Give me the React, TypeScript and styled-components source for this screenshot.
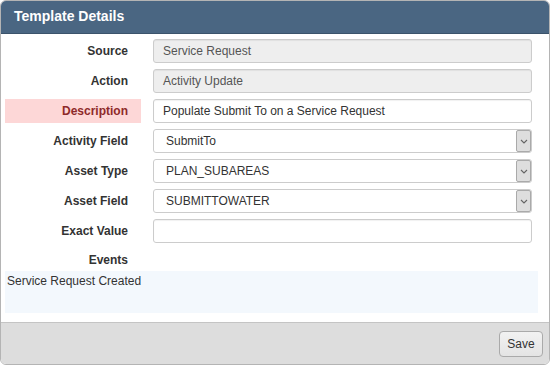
import React from "react";
import styled, { createGlobalStyle } from "styled-components";

const GlobalStyle = createGlobalStyle`
  html, body { margin: 0; padding: 0; background: #ffffff; overflow: hidden; }
  body { font-family: "Liberation Sans", Arial, sans-serif; font-size: 12px; color: #333; }
  * { box-sizing: border-box; }
`;

const Panel = styled.div`
  width: 550px;
  height: 365px;
  border: 1px solid #b4b4b4;
  border-radius: 6px;
  overflow: hidden;
  display: flex;
  flex-direction: column;
  background: #ffffff;
`;

const Header = styled.div`
  height: 33px;
  flex: none;
  background: #4a6682;
  border-bottom: 1px solid #3b536b;
  display: flex;
  align-items: center;
  padding: 0 0 2px 13px;
  color: #ffffff;
  font-weight: bold;
  font-size: 14px;
`;

const Body = styled.div`
  flex: 1;
  padding: 5px 11px 0 4px;
  display: flex;
  flex-direction: column;
`;

const FormGrid = styled.div`
  display: grid;
  grid-template-columns: 136px 1fr;
  column-gap: 12px;
  row-gap: 6px;
  margin-right: 6px;
`;

const Label = styled.div<{ $error?: boolean; $short?: boolean }>`
  height: ${(p) => (p.$short ? "22px" : "24px")};
  display: flex;
  align-items: center;
  justify-content: flex-end;
  padding-right: 13px;
  font-weight: bold;
  font-size: 12px;
  color: ${(p) => (p.$error ? "#8e2a2a" : "#333333")};
  background: ${(p) => (p.$error ? "#fdd7d7" : "transparent")};
`;

const TextField = styled.div<{ $disabled?: boolean }>`
  height: 24px;
  border: 1px solid #cccccc;
  border-radius: 3px;
  background: ${(p) => (p.$disabled ? "#eeeeee" : "#ffffff")};
  box-shadow: inset 0 1px 1px rgba(0, 0, 0, 0.06);
  display: flex;
  align-items: center;
  padding-left: 9px;
  font-size: 12px;
  color: ${(p) => (p.$disabled ? "#555555" : "#333333")};
  white-space: nowrap;
  overflow: hidden;
`;

const SelectField = styled.div`
  height: 24px;
  border: 1px solid #cccccc;
  border-radius: 3px;
  background: #ffffff;
  display: flex;
  align-items: center;
  justify-content: space-between;
  padding: 0 0 0 12px;
  font-size: 12px;
  color: #333333;
`;

const ArrowButton = styled.span`
  width: 15px;
  height: 22px;
  background: #dedede;
  border: 1px solid #aaaaaa;
  border-radius: 2px;
  display: flex;
  align-items: center;
  justify-content: center;
`;

const Empty = styled.div``;

const EventsBox = styled.div`
  height: 42px;
  background: #f3f8fd;
  padding: 3px 2px;
  font-size: 12px;
  color: #333333;
`;

const Footer = styled.div`
  height: 42px;
  flex: none;
  background: #dddddd;
  border-top: 1px solid #c4c4c4;
  display: flex;
  align-items: center;
  justify-content: flex-end;
  padding-right: 6px;
`;

const SaveButton = styled.button`
  width: 44px;
  height: 26px;
  border: 1px solid #aaaaaa;
  border-radius: 4px;
  background: linear-gradient(#f2f2f2, #e4e4e4);
  font-family: "Liberation Sans", Arial, sans-serif;
  font-size: 12px;
  color: #333333;
  padding: 0;
`;

const Chevron = () => (
  <svg width="8" height="5" viewBox="0 0 8 5">
    <path d="M1 1 L4 4 L7 1" fill="none" stroke="#666" strokeWidth="1.1" />
  </svg>
);

const Select = ({ value }: { value: string }) => (
  <SelectField>
    <span>{value}</span>
    <ArrowButton>
      <Chevron />
    </ArrowButton>
  </SelectField>
);

export default function App() {
  return (
    <>
      <GlobalStyle />
      <Panel>
        <Header>Template Details</Header>
        <Body>
          <FormGrid>
            <Label>Source</Label>
            <TextField $disabled>Service Request</TextField>
            <Label>Action</Label>
            <TextField $disabled>Activity Update</TextField>
            <Label $error>Description</Label>
            <TextField>Populate Submit To on a Service Request</TextField>
            <Label>Activity Field</Label>
            <Select value="SubmitTo" />
            <Label>Asset Type</Label>
            <Select value="PLAN_SUBAREAS" />
            <Label>Asset Field</Label>
            <Select value="SUBMITTOWATER" />
            <Label>Exact Value</Label>
            <TextField />
            <Label $short>Events</Label>
            <Empty />
          </FormGrid>
          <EventsBox>Service Request Created</EventsBox>
        </Body>
        <Footer>
          <SaveButton>Save</SaveButton>
        </Footer>
      </Panel>
    </>
  );
}
